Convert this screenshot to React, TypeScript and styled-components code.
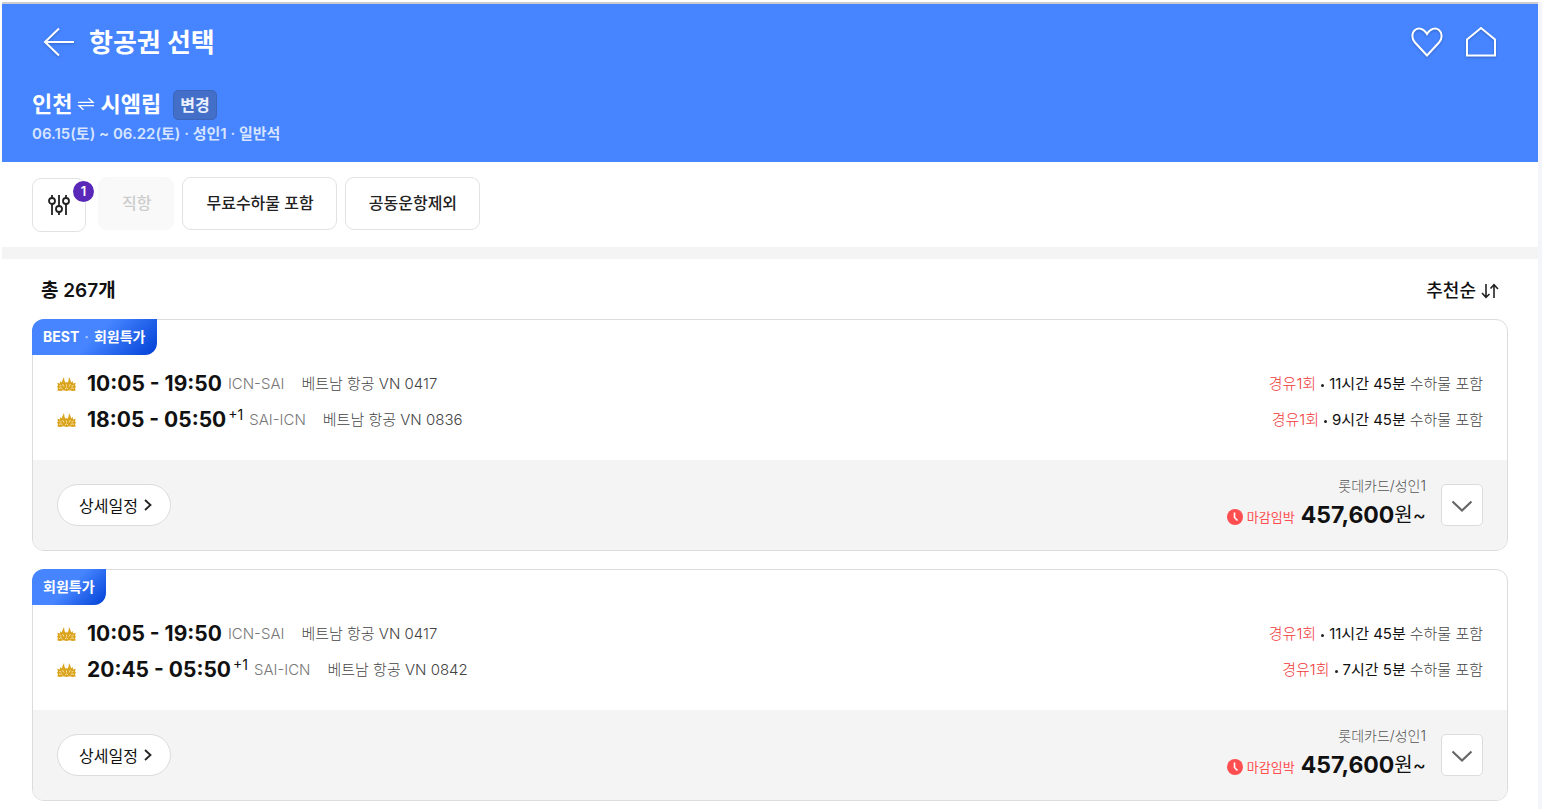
import React from 'react';
import styled, { createGlobalStyle } from 'styled-components';

const GlobalStyle = createGlobalStyle`
  * { box-sizing: border-box; }
  body {
    margin: 0;
    background: #f3f5fb;
    color: #111;
    font-family: Inter, "Noto Sans CJK KR", sans-serif;
    font-size: 15px;
  }
  button { font: inherit; color: inherit; margin: 0; cursor: pointer; }
  h1, h2, p, ul { margin: 0; padding: 0; }
  ul { list-style: none; }
`;

const Frame = styled.div`
  border-top: 2px solid #fff;
  border-left: 2px solid #fff;
  padding-right: 4px;
`;

const Page = styled.div`
  background: #fff;
  border-top: 2px solid #cbcbd0;
`;

const Header = styled.header`
  background: #4685ff;
  color: #fff;
  padding: 17px 30px 18px;
`;

const TitleBar = styled.div`
  display: flex;
  align-items: center;
  height: 42px;
  padding: 0 10px;
  margin-bottom: 27px;
`;

const Title = styled.h1`
  flex: 1;
  margin-left: 13px;
  padding-top: 2px;
  font-size: 26px;
  line-height: 42px;
  font-weight: 700;
`;

const IconButton = styled.button`
  display: flex;
  padding: 0;
  border: 0;
  background: none;
  filter: drop-shadow(0 1px 1px rgba(0, 0, 0, 0.25));
  & + & { margin-left: 20px; }
`;

const RouteRow = styled.div`
  display: flex;
  align-items: center;
  height: 30px;
  margin-bottom: 4px;
`;

const RouteName = styled.h2`
  display: flex;
  align-items: center;
  gap: 5px;
  padding-bottom: 2px;
  font-size: 22px;
  line-height: 28px;
  font-weight: 700;
`;

const ChangeButton = styled.button`
  height: 30px;
  margin-left: 12px;
  padding: 0 6px;
  border: 1px solid #3b65b8;
  border-radius: 5px;
  background: #446fc8;
  color: #e9f0ff;
  font-size: 16px;
  line-height: 24px;
  font-weight: 700;
`;

const TripInfo = styled.p`
  color: #d6e4ff;
  font-size: 15px;
  line-height: 20px;
  font-weight: 600;
`;

const Filters = styled.div`
  display: flex;
  align-items: flex-start;
  gap: 8px;
  padding: 15px 30px;
  border-bottom: 12px solid #f4f4f4;
`;

const FilterButton = styled.button`
  position: relative;
  display: flex;
  align-items: center;
  justify-content: center;
  width: 54px;
  height: 54px;
  margin: 1px 4px 0 0;
  border: 1px solid #e2e2e4;
  border-radius: 9px;
  background: #fff;
`;

const FilterCount = styled.span`
  position: absolute;
  top: 2px;
  right: -9px;
  width: 21px;
  height: 21px;
  border-radius: 50%;
  background: #5a28b8;
  color: #fff;
  font-size: 13px;
  line-height: 21px;
  font-weight: 600;
  text-align: center;
`;

const FilterChip = styled.button`
  height: 53px;
  padding: 0 22px 3px 23px;
  border: 1px solid #e2e2e4;
  border-radius: 9px;
  background: #fff;
  color: #222;
  font-size: 16px;
  font-weight: 500;
  &:disabled {
    border-color: #f8f8f8;
    background: #f9f9f9;
    color: #ccc;
  }
`;

const Results = styled.main`
  padding: 0 30px 8px;
`;

const ResultsBar = styled.div`
  display: flex;
  align-items: center;
  justify-content: space-between;
  height: 60px;
  padding: 3px 9px 0;
  line-height: 26px;
`;

const Total = styled.p`
  font-size: 19px;
  font-weight: 600;
`;

const SortButton = styled.button`
  display: flex;
  align-items: center;
  gap: 5px;
  padding: 0;
  border: 0;
  background: none;
  font-size: 18px;
  font-weight: 500;
`;

const CardList = styled.ul`
  display: flex;
  flex-direction: column;
  gap: 18px;
`;

const Card = styled.li`
  border: 1px solid #dcdcde;
  border-radius: 12px;
`;

const Tag = styled.div`
  display: flex;
  gap: 5px;
  width: fit-content;
  height: 36px;
  margin: -1px 0 11px -1px;
  padding: 0 11px;
  border-radius: 12px 0 12px 0;
  background: linear-gradient(135deg, #4685ff 50%, #0040d5);
  color: #fff;
  font-size: 14px;
  line-height: 36px;
  font-weight: 700;
`;

const TagDot = styled.span`
  color: #a9c6ff;
`;

const Legs = styled.div`
  padding: 0 24px 22px;
`;

const Leg = styled.div`
  display: flex;
  align-items: center;
  height: 36px;
  font-weight: 300;
  line-height: 24px;
`;

const Times = styled.span`
  margin-left: 11px;
  font-size: 21px;
  font-weight: 700;
`;

const NextDay = styled.span`
  align-self: flex-start;
  margin-left: 2px;
  font-size: 14px;
  line-height: 26px;
  font-weight: 400;
`;

const Airports = styled.span`
  margin-left: 6px;
  color: #777;
`;

const Airline = styled.span`
  flex: 1;
  margin-left: 17px;
  color: #444;
`;

const Stops = styled.span`
  color: #f03a3a;
`;

const Dot = styled.span`
  width: 3px;
  height: 3px;
  margin: 2px 5px 0;
  border-radius: 50%;
  background: #222;
`;

const Duration = styled.span`
  margin-right: 4px;
  font-weight: 400;
`;

const Baggage = styled.span`
  color: #444;
`;

const CardFooter = styled.div`
  display: flex;
  align-items: center;
  height: 90px;
  padding: 0 24px;
  border-radius: 0 0 11px 11px;
  background: #f4f4f4;
`;

const DetailButton = styled.button`
  display: flex;
  align-items: center;
  gap: 5px;
  height: 42px;
  padding: 0 17px 1px 21px;
  border: 1px solid #dcdcde;
  border-radius: 21px;
  background: #fff;
  font-size: 16px;
  font-weight: 400;
`;

const PriceBlock = styled.div`
  flex: 1;
  margin-right: 15px;
  text-align: right;
`;

const PayMethod = styled.p`
  color: #555;
  font-size: 14px;
  line-height: 20px;
  font-weight: 300;
`;

const PriceRow = styled.div`
  display: flex;
  align-items: center;
  justify-content: flex-end;
  height: 38px;
`;

const Urgent = styled.span`
  margin: 4px 6px 0 4px;
  color: #ff4e50;
  font-size: 13px;
  line-height: 20px;
`;

const Price = styled.strong`
  font-size: 23px;
  line-height: 36px;
  font-weight: 700;
`;

const Won = styled.span`
  font-size: 20px;
  line-height: 36px;
`;

const ClockSlot = styled.span`
  display: flex;
  margin-top: 4px;
`;

const ExpandButton = styled.button`
  display: flex;
  align-items: center;
  justify-content: center;
  width: 42px;
  height: 42px;
  padding: 2px 0 0;
  border: 1px solid #dcdcde;
  border-radius: 5px;
  background: #fff;
`;

const BackIcon = () => (
  <svg width="34" height="32" viewBox="0 0 34 32" fill="none" stroke="#fff" strokeWidth="2">
    <path d="M17 2.500L3 16l14 13.500M3 16h29" />
  </svg>
);

const HeartIcon = () => (
  <svg width="34" height="34" viewBox="0 0 34 34" fill="none" stroke="#fff" strokeWidth="2">
    <path d="M17 30.500L5 17.500C1.500 13.500 1.500 8 5 5c3.500-2.800 8.800-1.500 12 4 3.200-5.500 8.500-6.800 12-4 3.500 3 3.500 8.500 0 12.500z" />
  </svg>
);

const HomeIcon = () => (
  <svg width="34" height="34" viewBox="0 0 34 34" fill="none" stroke="#fff" strokeWidth="2">
    <path d="M3 14.500L17 3l14 11.500V30.500H3z" />
  </svg>
);

const SwapIcon = () => (
  <svg width="18" height="16" viewBox="0 0 18 16" fill="none" stroke="#fff" strokeWidth="1.300">
    <path d="M1 6.300h15l-4.500-4M17 9.700H2l4.500 4" />
  </svg>
);

const SlidersIcon = () => (
  <svg width="24" height="24" viewBox="0 0 24 24" fill="none" stroke="#222" strokeWidth="1.800">
    <path d="M5 2v3M5 11v11M12 2v11M12 19v3M19 2v3M19 11v11" />
    <circle cx="5" cy="8" r="3" />
    <circle cx="12" cy="16" r="3" />
    <circle cx="19" cy="8" r="3" />
  </svg>
);

const SortIcon = () => (
  <svg width="18" height="16" viewBox="0 0 18 16" fill="none" stroke="#222" strokeWidth="1.600">
    <path d="M5 1v13M1 10l4 4.300L8.500 11M13 15V2M9.500 5.500L13 1.700 17 6" />
  </svg>
);

const LotusIcon = () => (
  <svg width="19" height="16" viewBox="0 0 19 16" fill="#d9a31c">
    <path d="M9.500 5.500L9 7 7.500 5 7 1 5.300 4.500 5 6.500 3.300 5 3 7.500.3 6.800 1 9.500 0 10.500l1 1.500-.7 2.500 3 .5 3-.8 3.200.8 3.200-.8 3 .8 3-.5-.7-2.500 1-1.500-1-1L18.700 6.800l-2.700.7-.3-2.500L14 6.500l-.3-2L12 1l-.5 4L10 7z" />
    <path d="M2.500 9.500l2 .5M2 12.500l2-.8 1.500 1.300M5.500 8l1.500 2.500M9.500 8.500v2M8 13l1.500-1.200L11 13M13.500 8L12 10.500M16.500 9.500l-2 .5M17 12.500l-2-.8-1.500 1.300" fill="none" stroke="#fff0c4" strokeWidth="0.800" />
  </svg>
);

const ClockIcon = () => (
  <svg width="16" height="16" viewBox="0 0 16 16" fill="none">
    <circle cx="8" cy="8" r="8" fill="#ff4e50" />
    <path d="M7.500 3.500V8.500l3 3" stroke="#fff" strokeWidth="1.600" />
  </svg>
);

const ChevronRight = () => (
  <svg width="10" height="14" viewBox="0 0 10 14" fill="none" stroke="#222" strokeWidth="1.800">
    <path d="M2 2l5.500 5L2 12" />
  </svg>
);

const ChevronDown = () => (
  <svg width="22" height="14" viewBox="0 0 22 14" fill="none" stroke="#666" strokeWidth="2.200">
    <path d="M1.500 2.500L11 11.500l9.500-9" />
  </svg>
);

type LegData = {
  times: string;
  nextDay?: string;
  airports: string;
  airline: string;
  duration: string;
};

type Flight = { tags: string[]; legs: LegData[]; price: string };

const outbound: LegData = {
  times: '10:05 - 19:50',
  airports: 'ICN-SAI',
  airline: '베트남 항공 VN 0417',
  duration: '11시간 45분',
};

const flights: Flight[] = [
  {
    tags: ['BEST', '회원특가'],
    legs: [
      outbound,
      { times: '18:05 - 05:50', nextDay: '+1', airports: 'SAI-ICN', airline: '베트남 항공 VN 0836', duration: '9시간 45분' },
    ],
    price: '457,600',
  },
  {
    tags: ['회원특가'],
    legs: [
      outbound,
      { times: '20:45 - 05:50', nextDay: '+1', airports: 'SAI-ICN', airline: '베트남 항공 VN 0842', duration: '7시간 5분' },
    ],
    price: '457,600',
  },
];

const FlightCard = ({ flight }: { flight: Flight }) => (
  <Card>
    <Tag>
      {flight.tags.map((tag, i) => (
        <React.Fragment key={tag}>
          {i > 0 && <TagDot>·</TagDot>}
          <span>{tag}</span>
        </React.Fragment>
      ))}
    </Tag>
    <Legs>
      {flight.legs.map((leg) => (
        <Leg key={leg.times}>
          <LotusIcon />
          <Times>{leg.times}</Times>
          {leg.nextDay && <NextDay>{leg.nextDay}</NextDay>}
          <Airports>{leg.airports}</Airports>
          <Airline>{leg.airline}</Airline>
          <Stops>경유1회</Stops>
          <Dot />
          <Duration>{leg.duration}</Duration>
          <Baggage>수하물 포함</Baggage>
        </Leg>
      ))}
    </Legs>
    <CardFooter>
      <DetailButton type="button">
        상세일정
        <ChevronRight />
      </DetailButton>
      <PriceBlock>
        <PayMethod>롯데카드/성인1</PayMethod>
        <PriceRow>
          <ClockSlot><ClockIcon /></ClockSlot>
          <Urgent>마감임박</Urgent>
          <Price>{flight.price}</Price>
          <Won>원~</Won>
        </PriceRow>
      </PriceBlock>
      <ExpandButton type="button" aria-label="펼치기">
        <ChevronDown />
      </ExpandButton>
    </CardFooter>
  </Card>
);

export default function App() {
  return (
    <Frame>
      <GlobalStyle />
      <Page>
        <Header>
          <TitleBar>
            <IconButton type="button" aria-label="뒤로"><BackIcon /></IconButton>
            <Title>항공권 선택</Title>
            <IconButton type="button" aria-label="찜"><HeartIcon /></IconButton>
            <IconButton type="button" aria-label="홈"><HomeIcon /></IconButton>
          </TitleBar>
          <RouteRow>
            <RouteName>
              <span>인천</span>
              <SwapIcon />
              <span>시엠립</span>
            </RouteName>
            <ChangeButton type="button">변경</ChangeButton>
          </RouteRow>
          <TripInfo>06.15(토) ~ 06.22(토) · 성인1 · 일반석</TripInfo>
        </Header>
        <Filters>
          <FilterButton type="button" aria-label="필터">
            <SlidersIcon />
            <FilterCount>1</FilterCount>
          </FilterButton>
          <FilterChip type="button" disabled>직항</FilterChip>
          <FilterChip type="button">무료수하물 포함</FilterChip>
          <FilterChip type="button">공동운항제외</FilterChip>
        </Filters>
        <Results>
          <ResultsBar>
            <Total>총 267개</Total>
            <SortButton type="button">
              추천순
              <SortIcon />
            </SortButton>
          </ResultsBar>
          <CardList>
            {flights.map((flight, i) => (
              <FlightCard key={i} flight={flight} />
            ))}
          </CardList>
        </Results>
      </Page>
    </Frame>
  );
}
